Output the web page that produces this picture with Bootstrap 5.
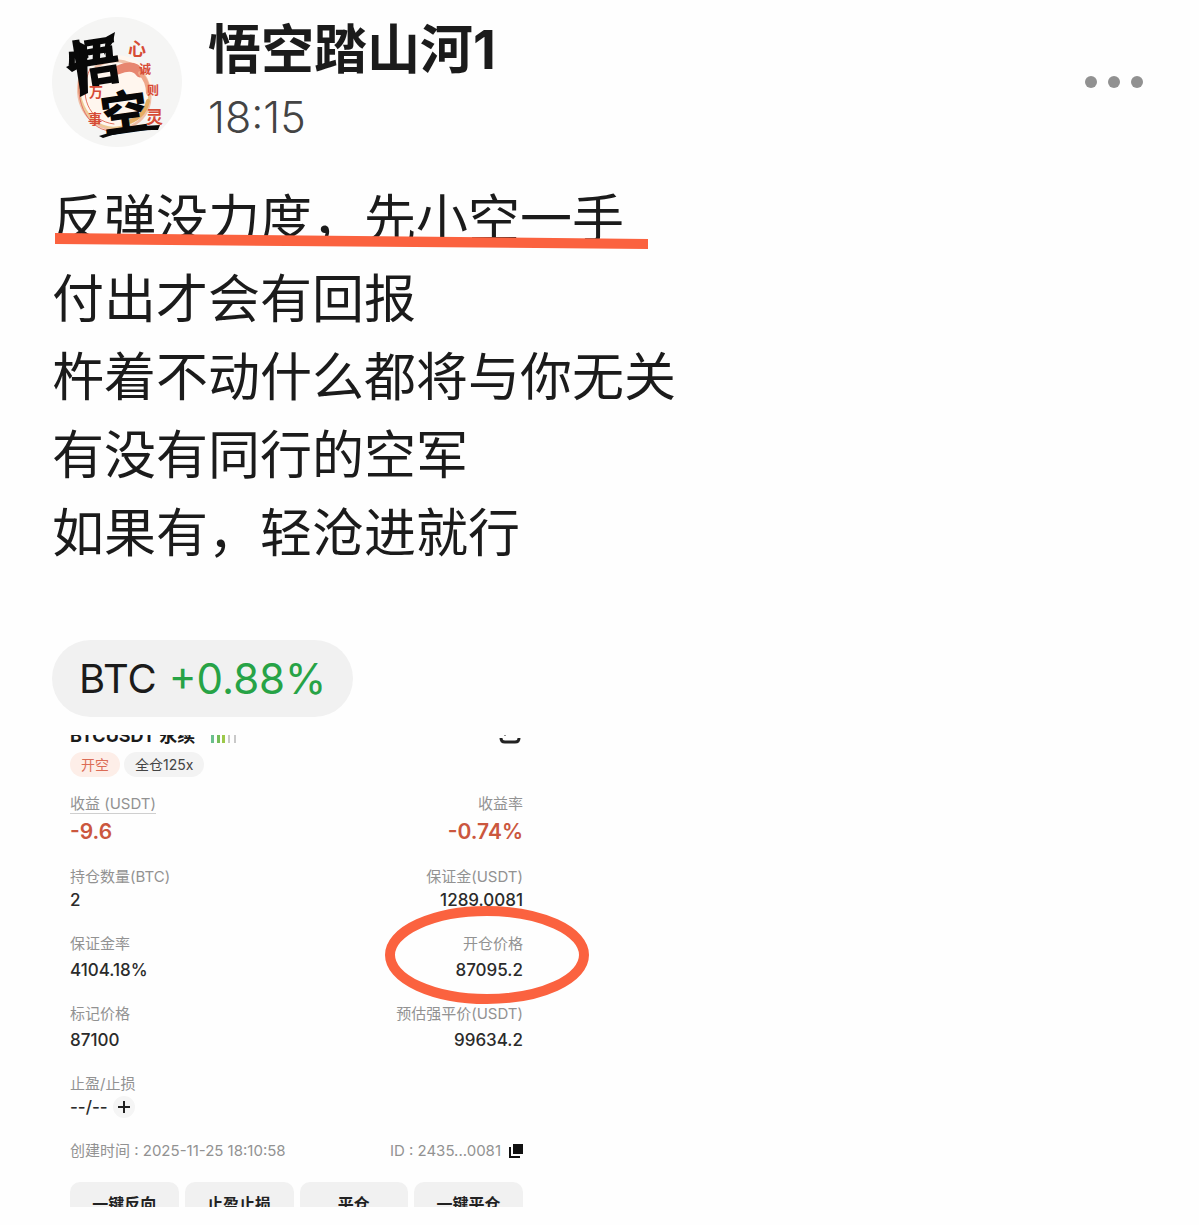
<!DOCTYPE html>
<html lang="zh-CN">
<head>
<meta charset="utf-8">
<meta name="viewport" content="width=device-width, initial-scale=1">
<title>悟空踏山河1</title>
<link rel="stylesheet" href="https://cdn.jsdelivr.net/npm/bootstrap@5.3.0/dist/css/bootstrap.min.css">
<style>
  body { background: #fefefe; color: #1b1b1b; font-family: Inter, "Noto Sans CJK SC", sans-serif; }
  .post { padding: 17px 52px 18px; }
  .avatar { width: 130px; height: 130px; }
  .author { gap: 26px; }
  .author-name { font-size: 53px; line-height: 66px; font-weight: 700; }
  .post-time { font-size: 43px; line-height: 68px; margin-bottom: -4px; font-weight: 300; color: #444; }
  .more-btn { width: 66px; height: 30px; }
  .post-text { margin-top: 30px; font-size: 52px; line-height: 78px; font-family: "Noto Sans CJK SC", sans-serif; }
  .post-text p { margin: 0; }
  .post-text .first-line { margin-bottom: 2px; }
  .marker { left: 0; top: 54px; width: 598px; height: 20px; }
  .coin { margin-top: 71px; padding: 0 27px; gap: 12px; border-radius: 39px; background: #f1f1f1; font-size: 40px; line-height: 77px; color: #1b1b1b; }
  .coin-up { font-size: 42px; color: #27a346; }
  .shot { margin-top: 18px; width: 100%; max-width: 490px; }
  .shot-view { height: 472px; overflow: hidden; padding: 0 19px 0 18px; }
  .shot-head { margin-top: -11px; height: 24px; margin-bottom: 4px; }
  .pair { font-size: 18px; line-height: 24px; font-weight: 700; }
  .tags { margin-bottom: 17px; }
  .tag { font-size: 14px; line-height: 25px; padding: 0 11px; border-radius: 13px; background: #f3f3f3; color: #444; }
  .tag-short { background: #fdeee8; color: #dc6c56; }
  .stat { margin-bottom: 22px; }
  .stat-label { font-size: 15px; line-height: 20px; color: #929292; }
  .stat-value { font-size: 17px; line-height: 24px; margin-top: 4px; font-weight: 500; color: #2b2b2b; }
  .tight .stat-value { margin-top: 1px; }
  .stat-value.loss { font-size: 21px; line-height: 27px; color: #cb573e; font-weight: 600; }
  .hint { height: 20px; border-bottom: 1px solid #cfcfcf; }
  .add-btn { width: 22px; height: 22px; background: #f5f5f5; margin-left: 5px; }
  .meta-row { font-size: 15px; line-height: 20px; color: #929292; margin-bottom: 21px; }
  .actions { gap: 6px; }
  .act-btn { flex: 1 1 0; height: 44px; border-radius: 10px; background: #f1f1f1; font-size: 16px; font-weight: 700; color: #222; padding: 0; }
  .ring { left: 333px; top: 170px; width: 204px; height: 100px; }
</style>
<script src="https://cdn.jsdelivr.net/npm/bootstrap@5.3.0/dist/js/bootstrap.bundle.min.js"></script>
</head>
<body>
<article class="post">
  <header class="d-flex align-items-center justify-content-between">
    <div class="author d-flex align-items-center">
      <svg class="avatar flex-shrink-0" viewBox="0 0 130 130" role="img" aria-label="悟空">
        <circle cx="65" cy="65" r="65" fill="#f5f5f4"/>
        <circle cx="65" cy="74" r="36" fill="#fff6ee"/>
        <g fill="none" stroke-linecap="round">
          <path d="M33 48C18 76 30 108 60 112C90 114 106 88 94 62C86 44 60 38 44 50" stroke="#f0c0a8" stroke-width="3"/>
          <path d="M28 58C22 88 44 116 68 110C96 104 106 76 88 54" stroke="#edc994" stroke-width="2"/>
          <path d="M38 52C26 78 36 104 62 107M30 50C20 80 34 112 58 114" stroke="#e27362" stroke-width="1"/>
          <path d="M66 53Q82 46 88 56" stroke="#e78670" stroke-width="9"/>
          <path d="M88 56Q96 64 96 76" stroke="#efa689" stroke-width="4"/>
          <path d="M72 106Q92 102 96 84" stroke="#e6ad62" stroke-width="4"/>
        </g>
        <g fill="#080808" font-family="Noto Sans CJK SC, sans-serif" font-weight="900">
          <text x="16" y="65" font-size="52" transform="rotate(-9 42 46)">悟</text>
          <text x="49" y="113" font-size="47" transform="rotate(-8 73 97)">空</text>
        </g>
        <path d="M47 119Q76 109 108 108L106 113Q76 112 51 121ZM14 50L34 41L31 49L20 55ZM27 25L35 29L36 76L28 80ZM54 20L63 15L61 25L52 38Z" fill="#080808"/>
        <g fill="#d64b36" font-family="Noto Sans CJK SC, sans-serif" font-weight="700">
          <text x="76" y="39" font-size="18">心</text>
          <text x="87" y="57" font-size="12">诚</text>
          <text x="37" y="80" font-size="14">万</text>
          <text x="95" y="78" font-size="12">则</text>
          <text x="36" y="107" font-size="14">事</text>
          <text x="94" y="106" font-size="17">灵</text>
        </g>
      </svg>
      <div>
        <div class="author-name">悟空踏山河1</div>
        <div class="post-time">18:15</div>
      </div>
    </div>
    <button type="button" class="more-btn btn p-0 border-0 d-flex align-items-center justify-content-center" aria-label="更多">
      <svg width="60" height="14" viewBox="0 0 60 14" fill="#919191"><circle cx="7" cy="7" r="6"/><circle cx="30" cy="7" r="6"/><circle cx="53" cy="7" r="6"/></svg>
    </button>
  </header>

  <div class="post-text">
    <div class="first-line position-relative">
      <p>反弹没力度，先小空一手</p>
      <svg class="marker position-absolute" viewBox="0 0 598 20" aria-hidden="true"><path d="M3 2L596 8V18L3 13Z" fill="#fb623f"/></svg>
    </div>
    <p>付出才会有回报</p>
    <p>杵着不动什么都将与你无关</p>
    <p>有没有同行的空军</p>
    <p>如果有，轻沧进就行</p>
  </div>

  <a href="#" class="coin d-inline-flex text-decoration-none"><span>BTC</span><span class="coin-up">+0.88%</span></a>

  <section class="shot position-relative">
    <div class="shot-view">
      <div class="shot-head d-flex justify-content-between">
        <div class="d-flex align-items-center gap-3">
          <span class="pair">BTCUSDT 永续</span>
          <svg width="28" height="14" viewBox="0 0 28 14" aria-hidden="true"><path d="M0 0h3v14H0z" fill="#6bbf8c"/><path d="M6 0h3v14H6z" fill="#75bd58"/><path d="M11 0h3v14h-3z" fill="#9cc94a"/><path d="M17 0h2v14h-2zM23 0h2v14h-2z" fill="#c9c9c9"/></svg>
        </div>
        <svg width="24" height="24" viewBox="0 0 24 24" fill="none" stroke="#222" stroke-width="3" aria-hidden="true"><path d="M2 14Q2 18 6 18H16Q20 18 20 14M5 10H7" /></svg>
      </div>
      <div class="tags d-flex gap-1">
        <span class="tag tag-short">开空</span><span class="tag">全仓125x</span>
      </div>
      <div class="stat d-flex justify-content-between">
        <div><div class="stat-label hint">收益 (USDT)</div><div class="stat-value loss">-9.6</div></div>
        <div class="text-end"><div class="stat-label">收益率</div><div class="stat-value loss">-0.74%</div></div>
      </div>
      <div class="stat tight d-flex justify-content-between">
        <div><div class="stat-label">持仓数量(BTC)</div><div class="stat-value">2</div></div>
        <div class="text-end"><div class="stat-label">保证金(USDT)</div><div class="stat-value">1289.0081</div></div>
      </div>
      <div class="stat d-flex justify-content-between">
        <div><div class="stat-label">保证金率</div><div class="stat-value">4104.18%</div></div>
        <div class="text-end"><div class="stat-label">开仓价格</div><div class="stat-value">87095.2</div></div>
      </div>
      <div class="stat d-flex justify-content-between">
        <div><div class="stat-label">标记价格</div><div class="stat-value">87100</div></div>
        <div class="text-end"><div class="stat-label">预估强平价(USDT)</div><div class="stat-value">99634.2</div></div>
      </div>
      <div class="stat tight">
        <div class="stat-label">止盈/止损</div>
        <div class="stat-value d-flex align-items-center">--/--
          <button type="button" class="add-btn btn rounded-circle border-0 p-0 d-flex align-items-center justify-content-center" aria-label="添加"><svg width="12" height="12" viewBox="0 0 12 12" stroke="#222" stroke-width="2"><path d="M6 0V12M0 6H12"/></svg></button>
        </div>
      </div>
      <div class="meta-row d-flex justify-content-between">
        <span>创建时间 : 2025-11-25 18:10:58</span>
        <span class="d-flex align-items-center gap-2">ID : 2435...0081
          <svg width="14" height="14" viewBox="0 0 14 14" aria-hidden="true"><path d="M4 0H14V10H4Z" fill="#111"/><path d="M1 3V13H11" fill="none" stroke="#111" stroke-width="2"/></svg>
        </span>
      </div>
      <div class="actions d-flex">
        <button type="button" class="act-btn btn border-0">一键反向</button>
        <button type="button" class="act-btn btn border-0">止盈止损</button>
        <button type="button" class="act-btn btn border-0">平仓</button>
        <button type="button" class="act-btn btn border-0">一键平仓</button>
      </div>
    </div>
    <svg class="ring position-absolute" viewBox="0 0 204 100" aria-hidden="true"><ellipse cx="102" cy="50" rx="97" ry="44" fill="none" stroke="#fb623f" stroke-width="10"/></svg>
  </section>
</article>
</body>
</html>
